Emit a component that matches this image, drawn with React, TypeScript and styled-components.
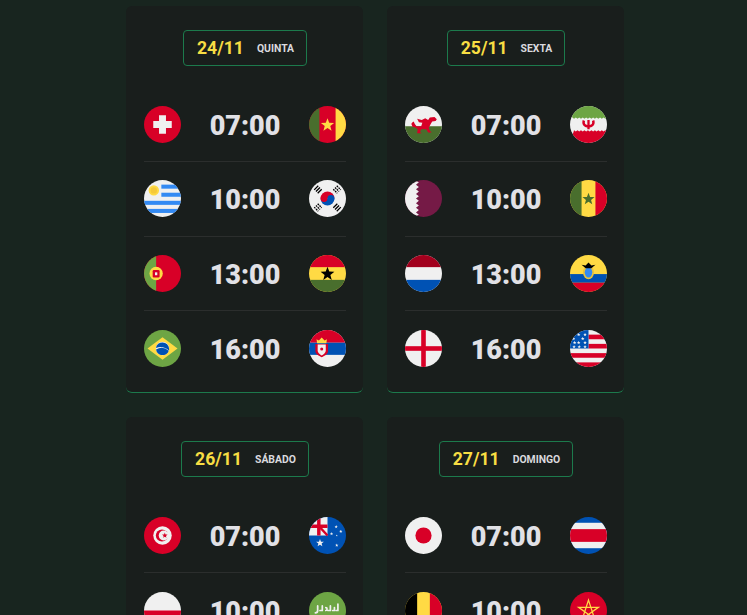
import React from 'react';
import styled, {createGlobalStyle} from 'styled-components';

const GlobalStyle = createGlobalStyle`
    * {
        box-sizing: border-box;
    }

    html, body {
        margin: 0;
        padding: 0;
        background: #18251f;
        font-family: Roboto, "Liberation Sans", sans-serif;
    }
`

const RED = '#d80027';
const GREEN = '#496e2d';
const LIGHT_GREEN = '#6da544';
const YELLOW = '#ffda44';
const WHITE = '#f0f0f0';
const BLUE = '#0052b4';

const star = (cx: number, cy: number, r: number) => {
    const points: string[] = [];
    for (let i = 0; i < 10; i++) {
        const radius = i % 2 === 0 ? r : r * 0.42;
        const angle = -Math.PI / 2 + (i * Math.PI) / 5;
        points.push(`${(cx + radius * Math.cos(angle)).toFixed(2)},${(cy + radius * Math.sin(angle)).toFixed(2)}`);
    }
    return points.join(' ');
};

// five pointed outline, drawn corner to corner
const pentagram = (cx: number, cy: number, r: number) => {
    const points: string[] = [];
    for (let i = 0; i < 5; i++) {
        const angle = -Math.PI / 2 + (i * 4 * Math.PI) / 5;
        points.push(`${(cx + r * Math.cos(angle)).toFixed(2)},${(cy + r * Math.sin(angle)).toFixed(2)}`);
    }
    return points.join(' ');
};

const flags: Record<string, React.ReactNode> = {
    switzerland: <>
        <rect width="64" height="64" fill={RED}/>
        <path d="M26 16h12v10h10v12H38v10H26V38H16V26h10z" fill={WHITE}/>
    </>,
    cameroon: <>
        <rect width="64" height="64" fill={RED}/>
        <rect width="18" height="64" fill={GREEN}/>
        <rect x="46" width="18" height="64" fill={YELLOW}/>
        <polygon points={star(32, 33, 12)} fill={YELLOW}/>
    </>,
    uruguay: <>
        <rect width="64" height="64" fill={WHITE}/>
        <rect x="30" y="8" width="34" height="7" fill="#338af3"/>
        <rect x="30" y="22" width="34" height="7" fill="#338af3"/>
        <rect y="36" width="64" height="7" fill="#338af3"/>
        <rect y="50" width="64" height="7" fill="#338af3"/>
        <circle cx="17" cy="18" r="9" fill={YELLOW}/>
        <circle cx="17" cy="18" r="5.5" fill="#f5c93a"/>
    </>,
    korea: <>
        <rect width="64" height="64" fill={WHITE}/>
        <path d="M20 32a12 12 0 0 1 24 0z" fill={RED}/>
        <path d="M20 32a12 12 0 0 0 24 0z" fill={BLUE}/>
        <circle cx="26" cy="32" r="6" fill={RED}/>
        <circle cx="38" cy="32" r="6" fill={BLUE}/>
        <g stroke="#000" strokeWidth="2.2">
            <path d="M9 17l7-7M12 20l7-7M15 23l7-7"/>
            <path d="M42 16l7 7M45 13l7 7M48 10l7 7" strokeDasharray="3 1.4"/>
            <path d="M9 47l7 7M12 44l7 7M15 41l7 7" strokeDasharray="3 1.4"/>
            <path d="M42 48l7-7M45 51l7-7M48 54l7-7"/>
        </g>
    </>,
    portugal: <>
        <rect width="64" height="64" fill={RED}/>
        <rect width="21" height="64" fill={LIGHT_GREEN}/>
        <circle cx="21" cy="32" r="11.5" fill={YELLOW}/>
        <rect x="15" y="26" width="12" height="13" rx="2" fill={RED}/>
        <rect x="19" y="30" width="4" height="5" fill={WHITE}/>
    </>,
    ghana: <>
        <rect width="64" height="64" fill={YELLOW}/>
        <rect width="64" height="21" fill={RED}/>
        <rect y="43" width="64" height="21" fill={GREEN}/>
        <polygon points={star(32, 33, 12.5)} fill="#000"/>
    </>,
    brazil: <>
        <rect width="64" height="64" fill={LIGHT_GREEN}/>
        <polygon points="32,12.5 58,32 32,51.5 6,32" fill={YELLOW}/>
        <circle cx="32" cy="32" r="11.5" fill={WHITE}/>
        <path d="M20.6 31a22 22 0 0 1 22.6 4.5A11.5 11.5 0 0 0 43.4 32 11.5 11.5 0 0 0 20.6 31z" fill={BLUE}/>
        <path d="M24.5 40.6A11.5 11.5 0 0 0 42.8 36a19 19 0 0 0-22-2.4 11.5 11.5 0 0 0 3.7 7z" fill={BLUE}/>
    </>,
    serbia: <>
        <rect width="64" height="64" fill={WHITE}/>
        <rect width="64" height="22" fill={RED}/>
        <rect y="22" width="64" height="21" fill={BLUE}/>
        <path d="M11 24h22v12c0 6-6 9-11 11-5-2-11-5-11-11z" fill={RED}/>
        <path d="M15 25h14v11c0 3-3 6-7 8-4-2-7-5-7-8z" fill={WHITE}/>
        <path d="M14 23l-1-7 4 2 5-5 5 5 4-2-1 7z" fill={YELLOW}/>
        <circle cx="22" cy="33" r="2.6" fill={RED}/>
    </>,
    wales: <>
        <rect width="64" height="64" fill={WHITE}/>
        <rect y="35" width="64" height="29" fill={GREEN}/>
        <path d="M12 29l3-2 2 4 3 4h8l2-6-6-1-3-6 8 2 6-3 5 3 3-4 8-1 4 4-2 3-6 1-3 5-3 6 2 5 3 3h-6l-3-6h-9l-2 5 3 2h-8l1-7-4-3-5-1-2-5z" fill={RED}/>
    </>,
    iran: <>
        <rect width="64" height="64" fill={WHITE}/>
        <path d="M0 0h64v20l-3 2-3-2-3 2-3-2-3 2-3-2-3 2-3-2-3 2-3-2-3 2-3-2-3 2-3-2-3 2-3-2-3 2-3-2-3 2-3-2z" fill={LIGHT_GREEN}/>
        <path d="M0 64h64V44l-3-2-3 2-3-2-3 2-3-2-3 2-3-2-3 2-3-2-3 2-3-2-3 2-3-2-3 2-3-2-3 2-3-2-3 2-3-2z" fill={RED}/>
        <path d="M22 24c-2 6 0 12 8 13v3h4v-3c8-1 10-7 8-13l-4 2c1 4 0 6-4 7v-9h-4v9c-4-1-5-3-4-7z" fill={RED}/>
    </>,
    qatar: <>
        <rect width="64" height="64" fill="#751a46"/>
        <path d="M0 0h16l8 4-5 4 5 4-5 4 5 4-5 4 5 4-5 4 5 4-5 4 5 4-5 4 5 4-5 4 5 4-8 4H0z" fill={WHITE}/>
    </>,
    senegal: <>
        <rect width="64" height="64" fill={YELLOW}/>
        <rect width="20" height="64" fill={GREEN}/>
        <rect x="44" width="20" height="64" fill={RED}/>
        <polygon points={star(32, 33, 11)} fill={GREEN}/>
    </>,
    netherlands: <>
        <rect width="64" height="64" fill={WHITE}/>
        <rect width="64" height="21" fill="#a2001d"/>
        <rect y="43" width="64" height="21" fill={BLUE}/>
    </>,
    ecuador: <>
        <rect width="64" height="64" fill={YELLOW}/>
        <rect y="33" width="64" height="15" fill={BLUE}/>
        <rect y="48" width="64" height="16" fill={RED}/>
        <ellipse cx="32" cy="30" rx="9.5" ry="12" fill="#e8c33a"/>
        <ellipse cx="32" cy="30" rx="6.5" ry="9" fill="#338af3"/>
        <path d="M20 17l7 1 5-5 5 5 7-1-7 6H27z" fill="#000"/>
    </>,
    england: <>
        <rect width="64" height="64" fill={WHITE}/>
        <rect x="28" width="8" height="64" fill={RED}/>
        <rect y="28" width="64" height="8" fill={RED}/>
    </>,
    usa: <>
        <rect width="64" height="64" fill={WHITE}/>
        <rect x="32" y="8" width="32" height="8" fill={RED}/>
        <rect x="32" y="24" width="32" height="8" fill={RED}/>
        <rect y="40" width="64" height="8" fill={RED}/>
        <rect y="56" width="64" height="8" fill={RED}/>
        <rect width="32" height="32" fill={BLUE}/>
        {[[8, 22], [15, 8], [15, 22], [22, 15], [26, 8], [26, 22], [7, 29], [16, 29], [26, 29], [6, 15]].map(([x, y]) => (
            <polygon key={`${x}-${y}`} points={star(x, y, 3.2)} fill={WHITE}/>
        ))}
    </>,
    tunisia: <>
        <rect width="64" height="64" fill={RED}/>
        <circle cx="32" cy="32" r="16" fill={WHITE}/>
        <circle cx="31" cy="32" r="10.5" fill={RED}/>
        <circle cx="34" cy="32" r="8.5" fill={WHITE}/>
        <polygon points={star(36, 32, 5)} fill={RED}/>
    </>,
    australia: <>
        <rect width="64" height="64" fill={BLUE}/>
        <rect width="32" height="32" fill={WHITE}/>
        <rect x="14" width="6" height="32" fill={RED}/>
        <rect y="13" width="32" height="6" fill={RED}/>
        <path d="M19 18l13 14" stroke={RED} strokeWidth="4"/>
        <polygon points={star(19, 45, 7)} fill={WHITE}/>
        <polygon points={star(47, 17, 3)} fill={WHITE}/>
        <polygon points={star(39, 29, 3)} fill={WHITE}/>
        <polygon points={star(48, 49, 3)} fill={WHITE}/>
        <polygon points={star(55, 25, 3)} fill={WHITE}/>
        <polygon points={star(48, 32, 1.8)} fill={WHITE}/>
    </>,
    poland: <>
        <rect width="64" height="64" fill={WHITE}/>
        <rect y="32" width="64" height="32" fill={RED}/>
    </>,
    saudi: <>
        <rect width="64" height="64" fill={LIGHT_GREEN}/>
        <g fill="none" stroke={WHITE} strokeWidth="3" strokeLinecap="round" strokeLinejoin="round">
            <path d="M15 24v8c0 3-2 4-4 4M23 24v8h-4M29 27c3 0 3 5 0 5M37 24v8h-4M44 27v5h-3M50 21v11h-3"/>
        </g>
        <rect x="18" y="40" width="28" height="4" fill={WHITE}/>
    </>,
    japan: <>
        <rect width="64" height="64" fill={WHITE}/>
        <circle cx="32" cy="32" r="14" fill={RED}/>
    </>,
    costaRica: <>
        <rect width="64" height="64" fill={BLUE}/>
        <rect y="10" width="64" height="44" fill={WHITE}/>
        <rect y="21" width="64" height="22" fill={RED}/>
    </>,
    belgium: <>
        <rect width="64" height="64" fill={YELLOW}/>
        <rect width="21" height="64" fill="#000"/>
        <rect x="43" width="21" height="64" fill={RED}/>
    </>,
    morocco: <>
        <rect width="64" height="64" fill={RED}/>
        <polygon points={pentagram(32, 32, 18)} fill="none" stroke={YELLOW} strokeWidth="2.2"/>
    </>,
};

type Match = {
    home: string
    away: string
    time: string
}

type Day = {
    date: string
    weekday: string
    matches: Match[]
}

const days: Day[] = [
    {
        date: '24/11', weekday: 'QUINTA', matches: [
            {home: 'switzerland', away: 'cameroon', time: '07:00'},
            {home: 'uruguay', away: 'korea', time: '10:00'},
            {home: 'portugal', away: 'ghana', time: '13:00'},
            {home: 'brazil', away: 'serbia', time: '16:00'},
        ]
    },
    {
        date: '25/11', weekday: 'SEXTA', matches: [
            {home: 'wales', away: 'iran', time: '07:00'},
            {home: 'qatar', away: 'senegal', time: '10:00'},
            {home: 'netherlands', away: 'ecuador', time: '13:00'},
            {home: 'england', away: 'usa', time: '16:00'},
        ]
    },
    {
        date: '26/11', weekday: 'SÁBADO', matches: [
            {home: 'tunisia', away: 'australia', time: '07:00'},
            {home: 'poland', away: 'saudi', time: '10:00'},
        ]
    },
    {
        date: '27/11', weekday: 'DOMINGO', matches: [
            {home: 'japan', away: 'costaRica', time: '07:00'},
            {home: 'belgium', away: 'morocco', time: '10:00'},
        ]
    },
];

const Flag = ({name}: { name: string }) => (
    <FlagDisc viewBox="0 0 64 64">{flags[name]}</FlagDisc>
);

export default function App() {
    return (
        <>
            <GlobalStyle/>
            <Page>
                <Schedule>
                    {days.map(day => (
                        <DayCard key={day.date}>
                            <DayHeader>
                                <DateBadge>
                                    <DateText>{day.date}</DateText>
                                    <Weekday>{day.weekday}</Weekday>
                                </DateBadge>
                            </DayHeader>
                            {day.matches.map(match => (
                                <MatchRow key={match.time}>
                                    <Flag name={match.home}/>
                                    <Time>{match.time}</Time>
                                    <Flag name={match.away}/>
                                </MatchRow>
                            ))}
                        </DayCard>
                    ))}
                </Schedule>
            </Page>
        </>
    );
}

const Page = styled.main`
    height: 615px;
    overflow: hidden;
    padding: 6px 0 0 126px;
    background: #18251f;
`

const Schedule = styled.div`
    display: grid;
    grid-template-columns: 237px 237px;
    column-gap: 24px;
    row-gap: 24px;
    align-items: start;
`

const DayCard = styled.section`
    padding: 24px 17px 7px 18px;
    background: #191e1c;
    border-bottom: 1px solid #1c7a4c;
    border-radius: 6px;
`

const DayHeader = styled.header`
    display: flex;
    justify-content: center;
    margin-bottom: 21.5px;
`

const DateBadge = styled.div`
    display: flex;
    align-items: center;
    gap: 13px;
    height: 36px;
    padding: 0 12px 0 13px;
    border: 1px solid #1c7a4c;
    border-radius: 4px;
`

const DateText = styled.span`
    font-size: 17.6px;
    font-weight: 700;
    color: #f7dd43;
`

const Weekday = styled.span`
    font-size: 10.4px;
    font-weight: 700;
    color: #d9d9de;
`

const MatchRow = styled.div`
    display: flex;
    align-items: center;
    justify-content: space-between;
    padding: 18.33px 0;
    border-bottom: 1px solid #2b2e2d;

    &:last-child {
        border-bottom: none;
    }
`

const FlagDisc = styled.svg`
    display: block;
    flex: none;
    width: 37px;
    height: 37px;
    border-radius: 50%;
`

const Time = styled.span`
    padding-top: 3px;
    font-size: 27px;
    font-weight: 900;
    line-height: 34px;
    color: #e1e1e6;
`
